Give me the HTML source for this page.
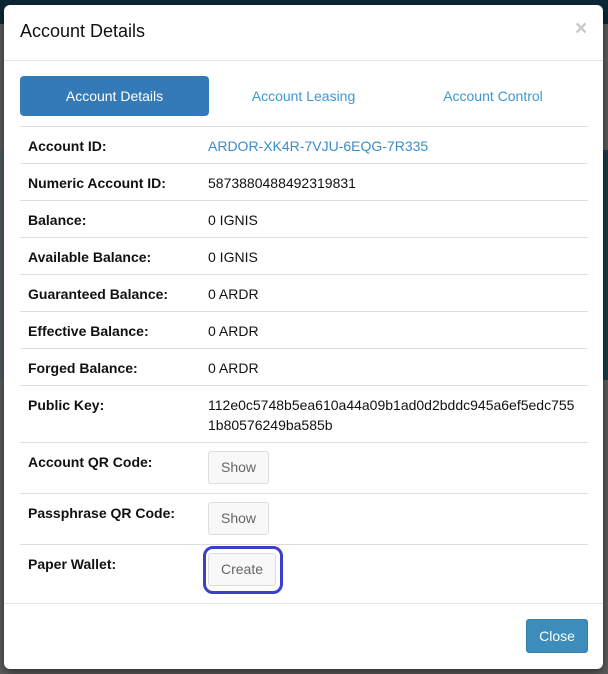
<!DOCTYPE html>
<html><head><style>
*{box-sizing:border-box;margin:0;padding:0}
body{width:608px;height:674px;overflow:hidden;background:#5c5c5c;font-family:"Liberation Sans",Arial,sans-serif;font-size:14px;color:#222;position:relative}
.bg1{position:absolute;left:0;top:0;width:608px;height:24px;background:#0c2836}
.bg2{position:absolute;left:560px;top:150px;width:48px;height:230px;background:#1b3c4a}
.bg3{position:absolute;left:0;top:150px;width:10px;height:230px;background:#4f5a60}
.modal{position:absolute;left:4px;top:5px;width:599px;height:664px;background:#fff;border-radius:6px;box-shadow:0 3px 9px rgba(0,0,0,.5)}
.title{position:absolute;left:16px;top:16px;font-size:18px;color:#111;font-family:"Liberation Sans",Arial,sans-serif}
.x{position:absolute;left:571px;top:12px;font-size:21px;font-weight:bold;color:#c8c8c8}
.hr{position:absolute;left:0;width:599px;height:1px;background:#e5e5e5}
.tab{position:absolute;top:71px;height:40px;line-height:40px;text-align:center;color:#3c9ad0;font-size:14px}
.tab.a{background:#337ab7;color:#fff;border-radius:4px}
.row{position:absolute;left:16px;width:568px;border-top:1px solid #ddd}
.l{position:absolute;left:8px;top:10px;font-weight:bold;color:#111;line-height:18px}
.v{position:absolute;left:188px;top:10px;color:#111;line-height:18px}
.btn{position:absolute;left:188px;top:8px;height:33px;width:61px;border:1px solid #ddd;border-radius:3px;background:#f8f8f8;color:#666;text-align:center;line-height:31px}
</style></head><body>
<div class="bg1"></div><div class="bg2"></div><div class="bg3"></div>
<div class="modal">
<div class="title">Account Details</div>
<div class="x">×</div>
<div class="hr" style="top:55px"></div>
<div class="tab a" style="left:16px;width:189px">Account Details</div>
<div class="tab" style="left:205px;width:189px">Account Leasing</div>
<div class="tab" style="left:394px;width:190px">Account Control</div>
<div class="row" style="top:121px;height:37px"><span class="l">Account ID:</span><span class="v" style="color:#3c8dc5">ARDOR-XK4R-7VJU-6EQG-7R335</span></div>
<div class="row" style="top:158px;height:37px"><span class="l">Numeric Account ID:</span><span class="v">5873880488492319831</span></div>
<div class="row" style="top:195px;height:37px"><span class="l">Balance:</span><span class="v">0 IGNIS</span></div>
<div class="row" style="top:232px;height:37px"><span class="l">Available Balance:</span><span class="v">0 IGNIS</span></div>
<div class="row" style="top:269px;height:37px"><span class="l">Guaranteed Balance:</span><span class="v">0 ARDR</span></div>
<div class="row" style="top:306px;height:37px"><span class="l">Effective Balance:</span><span class="v">0 ARDR</span></div>
<div class="row" style="top:343px;height:37px"><span class="l">Forged Balance:</span><span class="v">0 ARDR</span></div>
<div class="row" style="top:380px;height:57px"><span class="l">Public Key:</span><span class="v" style="line-height:20px;top:9px">112e0c5748b5ea610a44a09b1ad0d2bddc945a6ef5edc755<br>1b80576249ba585b</span></div>
<div class="row" style="top:437px;height:51px"><span class="l">Account QR Code:</span><span class="btn">Show</span></div>
<div class="row" style="top:488px;height:51px"><span class="l">Passphrase QR Code:</span><span class="btn">Show</span></div>
<div class="row" style="top:539px;height:59px"><span class="l">Paper Wallet:</span><span class="btn" style="width:68px">Create</span>
<div style="position:absolute;left:183px;top:1px;width:80px;height:48px;border:3px solid #3c3fc8;border-radius:10px"></div></div>
<div class="hr" style="top:598px"></div>
<div style="position:absolute;left:522px;top:614px;width:62px;height:34px;background:#3c8dbc;border:1px solid #367fa9;border-radius:3px;color:#fff;text-align:center;line-height:32px;font-size:14px">Close</div>
</div>
</body></html>
